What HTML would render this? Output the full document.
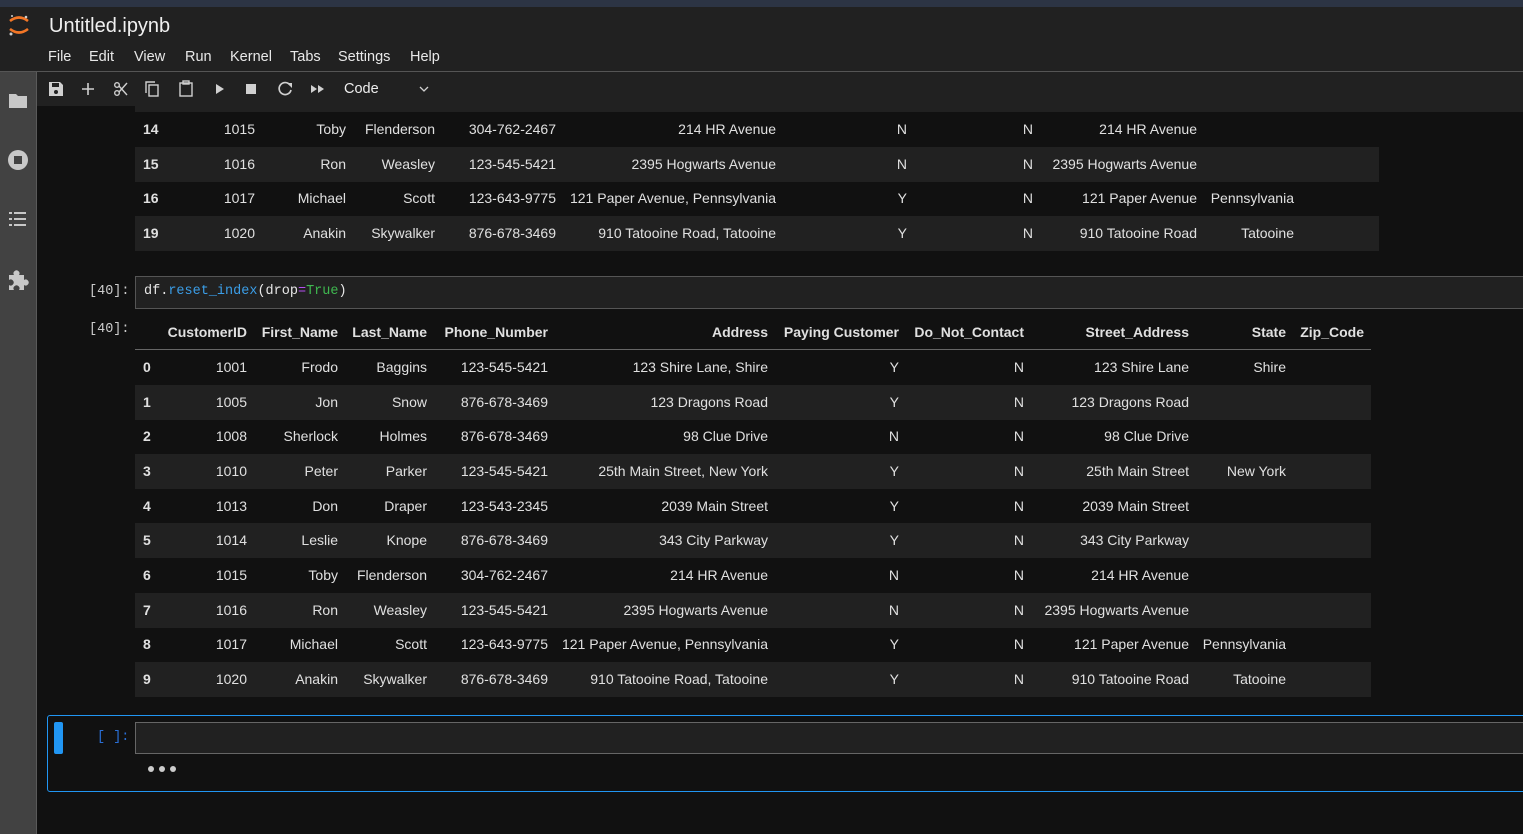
<!DOCTYPE html>
<html><head><meta charset="utf-8"><style>
*{margin:0;padding:0;box-sizing:border-box}
body{width:1523px;height:834px;overflow:hidden;background:#111;font-family:"Liberation Sans",sans-serif;color:#e0e0e0;position:relative;font-size:14px}
.abs{position:absolute}
.top{left:0;top:0;width:1523px;height:7px;background:#2c3444}
.hdr{left:0;top:7px;width:1523px;height:65px;background:#212121;border-bottom:1px solid #555}
.side{left:0;top:72px;width:37px;height:762px;background:#424242;border-right:1px solid #5a5a5a}
.tb{left:37px;top:72px;width:1486px;height:34px;background:#212121}
.menu span{position:absolute;top:49px;font-size:14.5px;color:#e8e8e8}
.row{position:absolute;left:135px;height:35px;line-height:35px}
.row span{position:absolute;left:0;text-align:right;white-space:nowrap}
.row span.i{left:8px;font-weight:bold}
.l{background:#212121}
.t1 .a{width:120px}.t1 .b{width:211px}.t1 .c{width:300px}.t1 .d{width:421px}.t1 .e{width:641px}.t1 .f{width:772px}.t1 .g{width:898px}.t1 .h{width:1062px}.t1 .j{width:1159px}
.t2 .a{width:112px}.t2 .b{width:203px}.t2 .c{width:292px}.t2 .d{width:413px}.t2 .e{width:633px}.t2 .f{width:764px}.t2 .g{width:889px}.t2 .h{width:1054px}.t2 .j{width:1151px}.t2 .k{width:1229px}
.t1{width:1244px}.t2{width:1236px}
.mono{font-family:"Liberation Mono",monospace;font-size:13.5px}
</style></head><body>
<div class="abs top"></div>
<div class="abs hdr"></div>
<svg class="abs" style="left:7px;top:12px" width="24" height="26" viewBox="0 0 24 26"><path d="M3 9 Q12 2 21 9" stroke="#f37626" stroke-width="2.6" fill="none"/><path d="M3 17 Q12 24 21 17" stroke="#f37626" stroke-width="2.6" fill="none"/><circle cx="19" cy="5" r="1.3" fill="#ccc"/><circle cx="4" cy="22" r="1.5" fill="#ccc"/><circle cx="5" cy="4" r="1" fill="#ccc"/></svg>
<div class="abs" style="left:49px;top:15px;font-size:20px;color:#f0f0f0">Untitled.ipynb</div>
<div class="menu"><span style="left:48px">File</span><span style="left:89px">Edit</span><span style="left:134px">View</span><span style="left:185px">Run</span><span style="left:230px">Kernel</span><span style="left:290px">Tabs</span><span style="left:338px">Settings</span><span style="left:410px">Help</span></div>
<div class="abs side"></div>
<svg class="abs" style="left:8px;top:90px" width="22" height="200" viewBox="0 0 22 200" fill="#c8c8c8">
<path d="M1 4h7l2 2h9v12H1z"/>
<circle cx="10" cy="70" r="10"/><rect x="6" y="66" width="8" height="8" fill="#424242"/>
<rect x="1" y="122" width="3" height="2"/><rect x="6" y="122" width="12" height="2"/><rect x="1" y="128" width="3" height="2"/><rect x="6" y="128" width="12" height="2"/><rect x="1" y="134" width="3" height="2"/><rect x="6" y="134" width="12" height="2"/>
<path d="M1 185h5a3 3 0 1 1 5 0h5v5a3 3 0 1 1 0 5v5h-5a3 3 0 1 0-5 0H1v-5a3 3 0 1 0 0-5z"/>
</svg>
<div class="abs tb"></div>
<svg class="abs" style="left:48px;top:80px" width="390" height="18" viewBox="0 0 390 18" fill="#d0d0d0" stroke="#d0d0d0">
<path d="M1 2h11l3 3v11H1z" stroke="none"/><rect x="4" y="3" width="7" height="4" fill="#212121" stroke="none"/><circle cx="8" cy="12" r="2" fill="#212121" stroke="none"/>
<path d="M40 3v12M34 9h12" stroke-width="1.6" fill="none"/>
<g fill="none" stroke-width="1.4"><circle cx="69" cy="5" r="2.3"/><circle cx="69" cy="13" r="2.3"/><path d="M71 6l8 9M71 12l8-9"/></g>
<g fill="none" stroke-width="1.4"><rect x="101" y="5" width="9" height="11"/><path d="M98 13V2h9"/></g>
<g fill="none" stroke-width="1.4"><rect x="132" y="3" width="12" height="13"/><rect x="135" y="1" width="6" height="3"/></g>
<path d="M168 4l8 5-8 5z" stroke="none"/>
<rect x="198" y="4" width="10" height="10" stroke="none"/>
<path d="M242 5a6 6 0 1 0 1 5" fill="none" stroke-width="1.7"/><path d="M239 3l5 0 0 5z" stroke="none"/>
<path d="M263 5l6 4-6 4zM270 5l6 4-6 4z" stroke="none"/>
<path d="M372 7l4 4 4-4" fill="none" stroke-width="1.3"/>
</svg>
<div class="abs" style="left:344px;top:81px;font-size:14.5px;color:#eee">Code</div>

<div class="abs" style="left:37px;top:106px;width:1486px;height:6px;background:#212121"></div>
<div class="abs" style="left:37px;top:106px;width:98px;height:6px;background:#111"></div>
<div class="row t1" style="top:112px"><span class="i">14</span><span class="a">1015</span><span class="b">Toby</span><span class="c">Flenderson</span><span class="d">304-762-2467</span><span class="e">214 HR Avenue</span><span class="f">N</span><span class="g">N</span><span class="h">214 HR Avenue</span></div>
<div class="row l t1" style="top:147px"><span class="i">15</span><span class="a">1016</span><span class="b">Ron</span><span class="c">Weasley</span><span class="d">123-545-5421</span><span class="e">2395 Hogwarts Avenue</span><span class="f">N</span><span class="g">N</span><span class="h">2395 Hogwarts Avenue</span></div>
<div class="row t1" style="top:181px"><span class="i">16</span><span class="a">1017</span><span class="b">Michael</span><span class="c">Scott</span><span class="d">123-643-9775</span><span class="e">121 Paper Avenue, Pennsylvania</span><span class="f">Y</span><span class="g">N</span><span class="h">121 Paper Avenue</span><span class="j">Pennsylvania</span></div>
<div class="row l t1" style="top:216px"><span class="i">19</span><span class="a">1020</span><span class="b">Anakin</span><span class="c">Skywalker</span><span class="d">876-678-3469</span><span class="e">910 Tatooine Road, Tatooine</span><span class="f">Y</span><span class="g">N</span><span class="h">910 Tatooine Road</span><span class="j">Tatooine</span></div>

<div class="abs mono" style="left:89px;top:284px;color:#ccc">[40]:</div>
<div class="abs mono" style="left:135px;top:276px;width:1400px;height:33px;background:#212121;border:1px solid #555;padding:7px 0 0 8px;color:#e8e8e8">df.<span style="color:#3b9ee8">reset_index</span>(drop<span style="color:#b44ff0">=</span><span style="color:#3fb950">True</span>)</div>
<div class="abs mono" style="left:89px;top:322px;color:#ccc">[40]:</div>

<div class="row t2" style="top:315px;font-weight:bold;border-bottom:1px solid #666;height:35px"><span class="a">CustomerID</span><span class="b">First_Name</span><span class="c">Last_Name</span><span class="d">Phone_Number</span><span class="e">Address</span><span class="f">Paying Customer</span><span class="g">Do_Not_Contact</span><span class="h">Street_Address</span><span class="j">State</span><span class="k">Zip_Code</span></div>
<div class="row t2" style="top:350px"><span class="i">0</span><span class="a">1001</span><span class="b">Frodo</span><span class="c">Baggins</span><span class="d">123-545-5421</span><span class="e">123 Shire Lane, Shire</span><span class="f">Y</span><span class="g">N</span><span class="h">123 Shire Lane</span><span class="j">Shire</span></div>
<div class="row l t2" style="top:385px"><span class="i">1</span><span class="a">1005</span><span class="b">Jon</span><span class="c">Snow</span><span class="d">876-678-3469</span><span class="e">123 Dragons Road</span><span class="f">Y</span><span class="g">N</span><span class="h">123 Dragons Road</span></div>
<div class="row t2" style="top:419px"><span class="i">2</span><span class="a">1008</span><span class="b">Sherlock</span><span class="c">Holmes</span><span class="d">876-678-3469</span><span class="e">98 Clue Drive</span><span class="f">N</span><span class="g">N</span><span class="h">98 Clue Drive</span></div>
<div class="row l t2" style="top:454px"><span class="i">3</span><span class="a">1010</span><span class="b">Peter</span><span class="c">Parker</span><span class="d">123-545-5421</span><span class="e">25th Main Street, New York</span><span class="f">Y</span><span class="g">N</span><span class="h">25th Main Street</span><span class="j">New York</span></div>
<div class="row t2" style="top:489px"><span class="i">4</span><span class="a">1013</span><span class="b">Don</span><span class="c">Draper</span><span class="d">123-543-2345</span><span class="e">2039 Main Street</span><span class="f">Y</span><span class="g">N</span><span class="h">2039 Main Street</span></div>
<div class="row l t2" style="top:523px"><span class="i">5</span><span class="a">1014</span><span class="b">Leslie</span><span class="c">Knope</span><span class="d">876-678-3469</span><span class="e">343 City Parkway</span><span class="f">Y</span><span class="g">N</span><span class="h">343 City Parkway</span></div>
<div class="row t2" style="top:558px"><span class="i">6</span><span class="a">1015</span><span class="b">Toby</span><span class="c">Flenderson</span><span class="d">304-762-2467</span><span class="e">214 HR Avenue</span><span class="f">N</span><span class="g">N</span><span class="h">214 HR Avenue</span></div>
<div class="row l t2" style="top:593px"><span class="i">7</span><span class="a">1016</span><span class="b">Ron</span><span class="c">Weasley</span><span class="d">123-545-5421</span><span class="e">2395 Hogwarts Avenue</span><span class="f">N</span><span class="g">N</span><span class="h">2395 Hogwarts Avenue</span></div>
<div class="row t2" style="top:627px"><span class="i">8</span><span class="a">1017</span><span class="b">Michael</span><span class="c">Scott</span><span class="d">123-643-9775</span><span class="e">121 Paper Avenue, Pennsylvania</span><span class="f">Y</span><span class="g">N</span><span class="h">121 Paper Avenue</span><span class="j">Pennsylvania</span></div>
<div class="row l t2" style="top:662px"><span class="i">9</span><span class="a">1020</span><span class="b">Anakin</span><span class="c">Skywalker</span><span class="d">876-678-3469</span><span class="e">910 Tatooine Road, Tatooine</span><span class="f">Y</span><span class="g">N</span><span class="h">910 Tatooine Road</span><span class="j">Tatooine</span></div>

<div class="abs" style="left:47px;top:715px;width:1490px;height:77px;border:1px solid #2196f3;border-radius:3px"></div>
<div class="abs" style="left:54px;top:722px;width:9px;height:32px;background:#2196f3;border-radius:2px"></div>
<div class="abs mono" style="left:97px;top:730px;color:#2a6fd6">[ ]:</div>
<div class="abs" style="left:135px;top:722px;width:1400px;height:32px;background:#212121;border:1px solid #666"></div>
<div class="abs" style="left:148px;top:766px;width:6px;height:6px;border-radius:3px;background:#ccc"></div>
<div class="abs" style="left:159px;top:766px;width:6px;height:6px;border-radius:3px;background:#ccc"></div>
<div class="abs" style="left:170px;top:766px;width:6px;height:6px;border-radius:3px;background:#ccc"></div>
</body></html>
